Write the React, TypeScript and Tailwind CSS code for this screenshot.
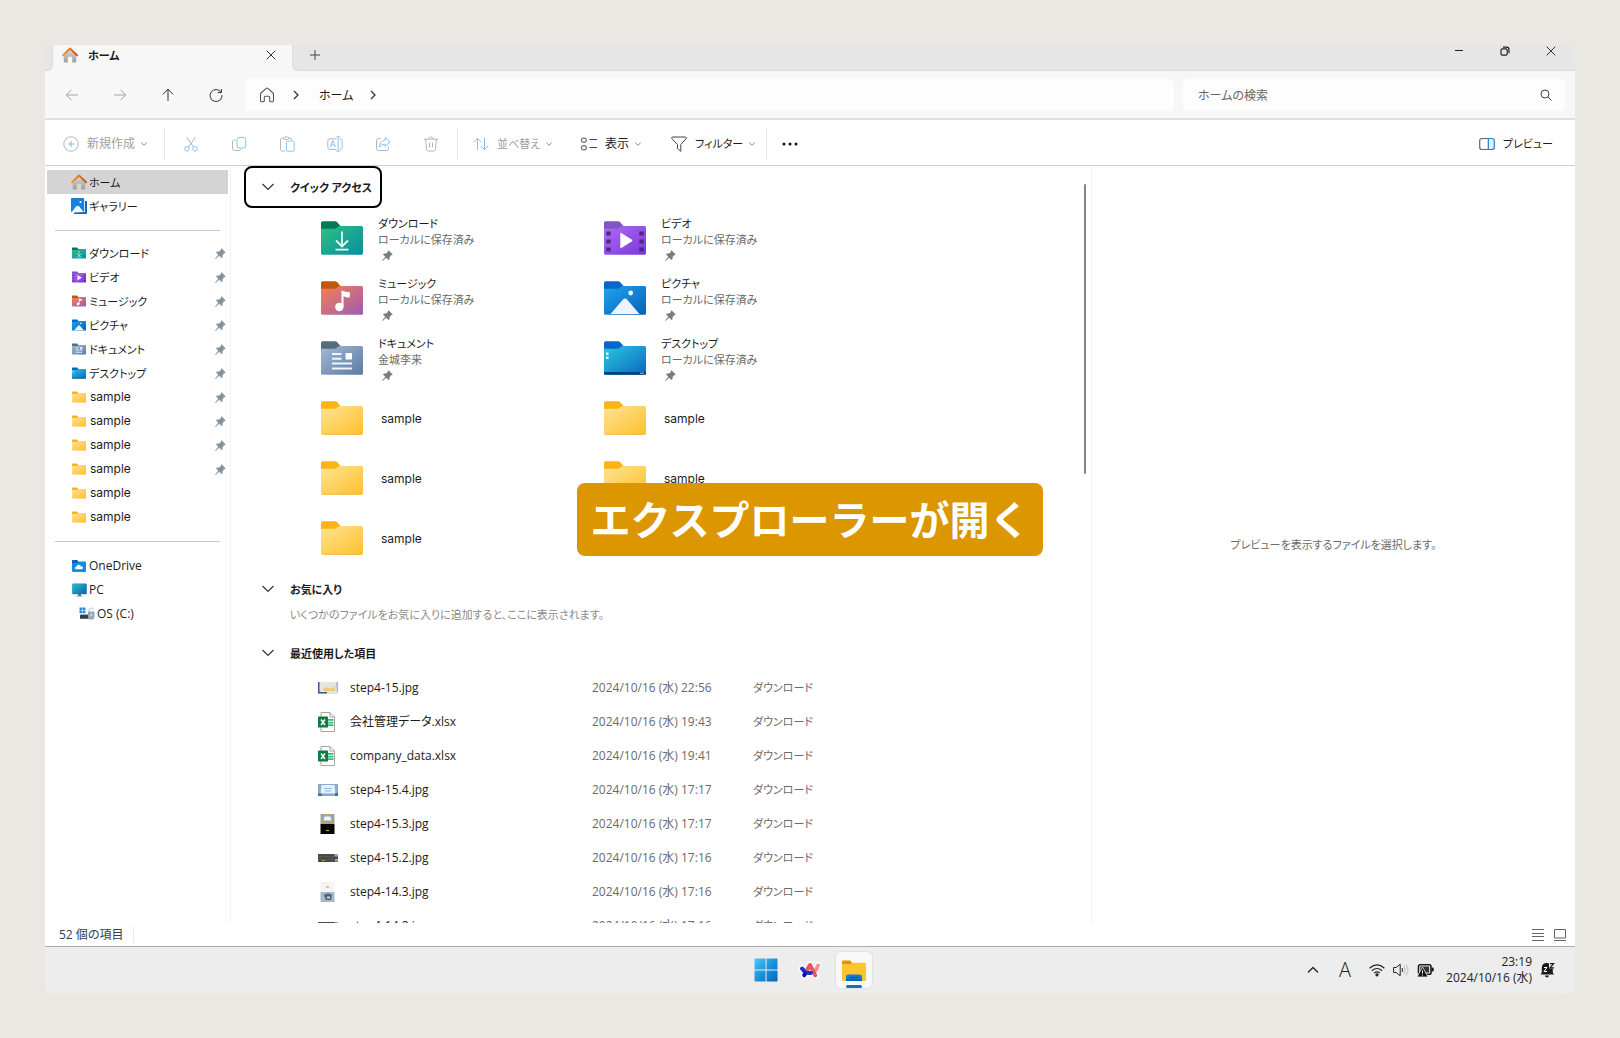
import { useId, type ReactNode } from 'react'
import clsx from 'clsx'

type FolderKind =
  | 'download'
  | 'video'
  | 'music'
  | 'picture'
  | 'document'
  | 'desktop'
  | 'plain'

type SideItem = { label: string; kind: FolderKind; pinned?: boolean }

const sideFolders: SideItem[] = [
  { label: 'ダウンロード', kind: 'download', pinned: true },
  { label: 'ビデオ', kind: 'video', pinned: true },
  { label: 'ミュージック', kind: 'music', pinned: true },
  { label: 'ピクチャ', kind: 'picture', pinned: true },
  { label: 'ドキュメント', kind: 'document', pinned: true },
  { label: 'デスクトップ', kind: 'desktop', pinned: true },
  { label: 'sample', kind: 'plain', pinned: true },
  { label: 'sample', kind: 'plain', pinned: true },
  { label: 'sample', kind: 'plain', pinned: true },
  { label: 'sample', kind: 'plain', pinned: true },
  { label: 'sample', kind: 'plain' },
  { label: 'sample', kind: 'plain' },
]

const quickFolders: { label: string; kind: FolderKind; note?: string }[] = [
  { label: 'ダウンロード', kind: 'download', note: 'ローカルに保存済み' },
  { label: 'ビデオ', kind: 'video', note: 'ローカルに保存済み' },
  { label: 'ミュージック', kind: 'music', note: 'ローカルに保存済み' },
  { label: 'ピクチャ', kind: 'picture', note: 'ローカルに保存済み' },
  { label: 'ドキュメント', kind: 'document', note: '金城李来' },
  { label: 'デスクトップ', kind: 'desktop', note: 'ローカルに保存済み' },
  { label: 'sample', kind: 'plain' },
  { label: 'sample', kind: 'plain' },
  { label: 'sample', kind: 'plain' },
  { label: 'sample', kind: 'plain' },
  { label: 'sample', kind: 'plain' },
]

const recentFiles = [
  { name: 'step4-15.jpg', date: '2024/10/16 (水) 22:56', thumb: <ThumbMap /> },
  { name: '会社管理データ.xlsx', date: '2024/10/16 (水) 19:43', thumb: <ExcelIcon /> },
  { name: 'company_data.xlsx', date: '2024/10/16 (水) 19:41', thumb: <ExcelIcon /> },
  { name: 'step4-15.4.jpg', date: '2024/10/16 (水) 17:17', thumb: <ThumbScreen /> },
  { name: 'step4-15.3.jpg', date: '2024/10/16 (水) 17:17', thumb: <ThumbTall dark /> },
  { name: 'step4-15.2.jpg', date: '2024/10/16 (水) 17:16', thumb: <ThumbKeyboard /> },
  { name: 'step4-14.3.jpg', date: '2024/10/16 (水) 17:16', thumb: <ThumbTall /> },
  { name: 'step4-14.2.jpg', date: '2024/10/16 (水) 17:16', thumb: <ThumbKeyboard /> },
]

export default function App() {
  return (
    <div className="relative flex h-screen min-h-[600px] flex-col bg-[#e9e8e3] p-[45px] font-['Open_Sans','Noto_Sans_CJK_JP',sans-serif] text-xs leading-4 text-[#1b1b1b] [font-feature-settings:'palt']">
      <div className="flex min-h-0 flex-1 flex-col overflow-hidden rounded-b-lg bg-white">
        <TitleBar />
        <AddressBar />
        <Toolbar />
        <div className="flex min-h-0 flex-1">
          <Sidebar />
          <FileList />
          <section className="flex w-[484px] shrink items-center justify-center border-l border-[#f3f3f3] text-[11px] text-[#6a6a6a]">
            プレビューを表示するファイルを選択します。
          </section>
        </div>
        <StatusBar />
        <Taskbar />
      </div>

      <div className="pointer-events-none absolute inset-0 flex items-center justify-center">
        <p className="rounded-lg bg-[#db9600] px-3.5 py-2 text-[40px] leading-[57px] font-bold text-white [font-feature-settings:normal]">
          エクスプローラーが開く
        </p>
      </div>
    </div>
  )
}

function TitleBar() {
  return (
    <header className="flex h-[26px] shrink-0 bg-[#f7f7f7]">
      <div className="w-2 rounded-br-md border-r border-b border-[#dcdcdc] bg-[#e6e6e6]" />
      <div className="flex w-[239px] items-center pr-3 pb-1.5 pl-[9px]">
        <HomeColorIcon />
        <span className="ml-2.5 flex-1 pt-0.5 text-[11px] font-semibold">ホーム</span>
        <button aria-label="タブを閉じる" className="p-1">
          <CloseIcon />
        </button>
      </div>
      <div className="flex flex-1 rounded-bl-md border-b border-l border-[#dcdcdc] bg-[#e6e6e6]">
        <button aria-label="新しいタブ" className="ml-[17px] self-start pt-[5px]">
          <svg viewBox="0 0 10 10" className="h-2.5 w-2.5" stroke="#444" fill="none">
            <path d="M5 0v10M0 5h10" />
          </svg>
        </button>
        <div className="ml-auto flex items-start gap-9 pt-px pr-[19px]">
          <button aria-label="最小化">
            <svg viewBox="0 0 10 10" className="h-2.5 w-2.5" stroke="#222" fill="none">
              <path d="M1 4.5h8" />
            </svg>
          </button>
          <button aria-label="元に戻す">
            <svg viewBox="0 0 10 10" className="h-2.5 w-2.5" stroke="#222" strokeWidth="1.2" fill="none">
              <rect x="1" y="2.8" width="6.2" height="6.4" rx="1.4" />
              <path d="M3 1.2h3.8Q9 1.2 9 3.4v3.8" />
            </svg>
          </button>
          <button aria-label="閉じる">
            <CloseIcon />
          </button>
        </div>
      </div>
    </header>
  )
}

function AddressBar() {
  return (
    <div className="flex h-[49px] shrink-0 items-start border-b-2 border-[#dfdfdf] bg-[#f7f7f7] pt-2 pr-2.5 pl-[19px]">
      <div className="flex h-8 w-[181px] shrink-0 items-center gap-8">
        <NavButton label="戻る" className="text-[#a3a3a3]">
          <path d="M14 8H2.5M7.5 2.8 2.2 8l5.3 5.2" />
        </NavButton>
        <NavButton label="進む" className="text-[#a3a3a3]">
          <path d="M2 8h11.500M8.500 2.800 13.800 8l-5.300 5.200" />
        </NavButton>
        <NavButton label="上へ" className="text-[#333]">
          <path d="M8 14V2.500M2.800 7.500 8 2.200l5.200 5.300" />
        </NavButton>
        <NavButton label="更新" className="text-[#333]">
          <path d="M13 5.200A6 6 0 1 0 14 8M13.400 2v3.600H9.800" />
        </NavButton>
      </div>
      <nav className="flex h-8 min-w-0 flex-1 items-center rounded bg-[#fdfdfd] pl-3.5" aria-label="パス">
        <button aria-label="ホーム">
          <svg viewBox="0 0 16 16" className="h-4 w-4" fill="none" stroke="#555" strokeWidth="1.1" strokeLinejoin="round">
            <path d="M1.5 7.2Q1.500 6.500 2 6L7.200 1.400q.8-.7 1.600 0L14 6q.5.5.5 1.200v6.300q0 1.200-1.200 1.200h-1.600q-1 0-1-1v-3.200Q10.700 9.300 9.500 9.300h-3Q5.300 9.300 5.300 10.500v3.200q0 1-1 1H2.700q-1.200 0-1.200-1.200z" />
          </svg>
        </button>
        <ChevronRight className="ml-4" />
        <a href="#" className="ml-[18px] pt-0.5">
          ホーム
        </a>
        <ChevronRight className="ml-[15px]" />
      </nav>
      <label className="ml-[9px] flex h-8 w-[382px] shrink items-center rounded bg-[#fdfdfd] pr-[13px] pl-[15px]">
        <input
          type="text"
          aria-label="検索"
          placeholder="ホームの検索"
          className="min-w-0 flex-1 bg-transparent pt-0.5 text-xs outline-none placeholder:text-[#666]"
        />
        <svg viewBox="0 0 12 12" className="h-3 w-3" fill="none" stroke="#444">
          <circle cx="5" cy="5" r="4" />
          <path d="m8 8 3.500 3.500" />
        </svg>
      </label>
    </div>
  )
}

function NavButton({ label, className, children }: { label: string; className: string; children: ReactNode }) {
  return (
    <button aria-label={label} className={className}>
      <svg viewBox="0 0 16 16" className="h-4 w-4" fill="none" stroke="currentColor">
        {children}
      </svg>
    </button>
  )
}

function Toolbar() {
  return (
    <div className="flex h-[46px] shrink-0 items-center border-b border-[#cfcfcf] pt-[3px] pr-[22px] pl-[18px]">
      <button className="flex w-[101px] items-center text-[#a0a0a0]">
        <svg viewBox="0 0 16 16" className="h-4 w-4" fill="none" stroke="#b5b5b5">
          <circle cx="8" cy="8" r="7.2" />
          <path d="M8 4.800v6.400M4.800 8h6.400" stroke="#7fbdf0" />
        </svg>
        <span className="ml-2">新規作成</span>
        <ChevronSmall className="ml-1.5" />
      </button>
      <div className="flex h-8 items-center gap-8 border-x border-[#e6e6e6] px-[18px]">
        <ToolIcon label="切り取り">
          <path d="M3.500 1 10.500 11M12.500 1 5.500 11" stroke="#b5b5b5" />
          <circle cx="4" cy="12.800" r="2.300" />
          <circle cx="12" cy="12.800" r="2.300" />
        </ToolIcon>
        <ToolIcon label="コピー">
          <path d="M4.500 4H3.300Q1.500 4 1.500 5.800v6.400Q1.500 14.500 3.800 14.500h4q2 0 2.200-1.700" stroke="#b5b5b5" />
          <rect x="6" y="1.500" width="8.700" height="10.500" rx="2" />
        </ToolIcon>
        <ToolIcon label="貼り付け">
          <path d="M6 15H3.200Q1.500 15 1.500 13.300V3.800Q1.500 2.200 3.200 2.200H11Q12.600 2.200 12.600 3.800" stroke="#b5b5b5" />
          <rect x="4.500" y="1" width="5.200" height="2.400" rx="1.200" stroke="#b5b5b5" fill="#fff" />
          <rect x="7.500" y="5" width="7.700" height="10.200" rx="1.400" />
        </ToolIcon>
        <ToolIcon label="名前の変更">
          <path d="M9.500 2.800H3Q.8 2.800.8 5v6.200q0 2.200 2.200 2.200h6.500M13 2.800q2.200 0 2.200 2.200v6.200q0 2.200-2.200 2.200" stroke="#b5b5b5" />
          <path d="m3.200 11 2.700-6.500L8.600 11M4.200 9h3.400M11.200.8v14.400M9.500.8h3.400M9.500 15.200h3.400" />
        </ToolIcon>
        <ToolIcon label="共有">
          <path d="M5.500 2.500H3.800q-2.300 0-2.300 2.300v7.400q0 2.300 2.300 2.300h7.400q2.300 0 2.300-2.300v-1.700" stroke="#b5b5b5" />
          <path d="M10.200 1.500 15 6l-4.800 4.500V8.200Q6.500 8 4.500 11 5 4.800 10.200 4z" strokeLinejoin="round" />
        </ToolIcon>
        <ToolIcon label="削除">
          <g stroke="#b5b5b5">
            <path d="M1 3.200h14M5.600 3Q5.800 1 8 1t2.400 2M2.500 3.200l1.100 10.200q.2 1.600 1.700 1.600h5.400q1.500 0 1.700-1.600l1.100-10.200M6.500 6.500v5M9.500 6.500v5" />
          </g>
        </ToolIcon>
      </div>
      <div className="flex h-8 flex-1 items-center pl-[15px]">
        <button className="flex w-[108px] items-center text-[#a0a0a0]">
          <svg viewBox="0 0 16 16" className="h-4 w-4" fill="none" stroke="#b5b5b5">
            <path d="M4.500 14V2.200M.8 6l3.700-3.800L8 6" />
            <path d="M11.500 2v11.800M8 10l3.500 3.800L15.200 10" stroke="#7fbdf0" />
          </svg>
          <span className="ml-2 text-[11px]">並べ替え</span>
          <ChevronSmall className="ml-1.5" />
        </button>
        <button className="flex w-[90px] items-center">
          <svg viewBox="0 0 16 16" className="h-4 w-4" fill="none" stroke="#444">
            <rect x=".6" y="2.200" width="4.600" height="4" rx="1" />
            <rect x=".6" y="9.800" width="4.600" height="4" rx="1" />
            <path d="M8.500 3.500H16M8.500 11.500H16" />
          </svg>
          <span className="ml-2">表示</span>
          <ChevronSmall className="ml-1.5" />
        </button>
        <button className="flex w-[95px] items-center">
          <svg viewBox="0 0 16 16" className="h-4 w-4" fill="none" stroke="#444" strokeLinejoin="round">
            <path d="M1.300 1h13.400q1 .8.300 1.800L9.800 8.500v6.800L6.500 12.500v-4L1 2.800Q.3 1.800 1.300 1z" />
          </svg>
          <span className="ml-2 text-[11px]">フィルター</span>
          <ChevronSmall className="ml-1.5" />
        </button>
        <button aria-label="詳細" className="h-8 border-l border-[#e6e6e6] pl-[15px]">
          <svg viewBox="0 0 16 4" className="h-1 w-4" fill="#111">
            <circle cx="2" cy="2" r="1.500" />
            <circle cx="8" cy="2" r="1.500" />
            <circle cx="14" cy="2" r="1.500" />
          </svg>
        </button>
        <button className="ml-auto flex items-center">
          <svg viewBox="0 0 16 16" className="h-4 w-4" fill="none" strokeWidth="1.200">
            <path d="M9 2.500H3Q.7 2.500.7 4.800v6.400q0 2.300 2.300 2.300h6" stroke="#666" />
            <path d="M9.300 2.500H13q2.300 0 2.300 2.300v6.400q0 2.300-2.300 2.300H9.300z" fill="#e8f3fc" stroke="#1a7fd6" />
          </svg>
          <span className="ml-2 text-[11px]">プレビュー</span>
        </button>
      </div>
    </div>
  )
}

function ToolIcon({ label, children }: { label: string; children: ReactNode }) {
  return (
    <button aria-label={label}>
      <svg viewBox="0 0 16 16" className="h-4 w-4" fill="none" stroke="#8cc4f2">
        {children}
      </svg>
    </button>
  )
}

function SideRow({
  icon,
  label,
  pinned,
  active,
  nested,
  latin,
}: {
  icon: ReactNode
  label: string
  pinned?: boolean
  active?: boolean
  nested?: boolean
  latin?: boolean
}) {
  return (
    <a
      href="#"
      className={clsx(
        'flex h-6 items-center pr-0.5',
        nested ? 'pl-8' : 'pl-6',
        active && 'bg-[#d4d4d4]',
      )}
    >
      <span className="flex w-4 shrink-0 justify-center">{icon}</span>
      <span
        className={clsx(
          'flex-1',
          label === 'sample' ? "ml-[3px] font-['Inter',sans-serif]" : 'ml-0.5',
          label !== 'sample' && !latin && 'pt-0.5 text-[11px]',
        )}
      >
        {label}
      </span>
      {pinned && <PinIcon className="text-[#87939b]" />}
    </a>
  )
}

function Sidebar() {
  return (
    <aside className="w-[186px] shrink-0 border-r border-[#f3f3f3] px-0.5 pt-1">
      <SideRow active icon={<HomeColorIcon />} label="ホーム" />
      <SideRow icon={<GalleryIcon />} label="ギャラリー" />
      <hr className="mx-2 mt-3 mb-2.5 border-[#c9c9c9]" />
      {sideFolders.map((item, i) => (
        <SideRow
          key={i}
          icon={<FolderIcon kind={item.kind} className="h-3 w-3.5" />}
          label={item.label}
          pinned={item.pinned}
        />
      ))}
      <hr className="mx-2 my-3 border-[#c9c9c9]" />
      <SideRow latin icon={<OneDriveIcon />} label="OneDrive" />
      <SideRow latin icon={<PcIcon />} label="PC" />
      <SideRow latin nested icon={<DriveIcon />} label="OS (C:)" />
    </aside>
  )
}

function SectionHeading({ label, focused }: { label: string; focused?: boolean }) {
  return (
    <button
      className={clsx(
        'ml-[13px] flex items-center rounded-lg border-2 pr-2 pl-4 text-[11px] font-semibold',
        focused ? 'h-[42px] border-black' : 'mt-[3px] h-9 border-transparent',
      )}
    >
      <svg viewBox="0 0 12 12" className="h-3 w-3" fill="none" stroke="#333" strokeWidth="1.200">
        <path d="m.5 3 5.500 5.500L11.500 3" />
      </svg>
      <span className="ml-4 pt-0.5">{label}</span>
    </button>
  )
}

function FileList() {
  return (
    <main className="relative min-w-0 flex-1 overflow-hidden">
      <SectionHeading focused label="クイック アクセス" />
      <div className="grid grid-cols-[repeat(2,283px)] pl-[90px]">
        {quickFolders.map((f, i) => (
          <a href="#" key={i} className="flex h-[60px] items-center">
            <FolderIcon kind={f.kind} className="h-[34px] w-[42px]" />
            {f.note ? (
              <span className="ml-[15px] flex flex-col text-[11px]">
                <span>{f.label}</span>
                <span className="text-[#6a6a6a]">{f.note}</span>
                <PinIcon className="mt-0.5 ml-1 text-[#7c7c7c]" />
              </span>
            ) : (
              <span className="ml-[18px] pt-0.5 font-['Inter',sans-serif]">{f.label}</span>
            )}
          </a>
        ))}
      </div>
      <SectionHeading label="お気に入り" />
      <p className="mb-3 ml-[59px] text-[11px] text-[#8b8b8b]">
        いくつかのファイルをお気に入りに追加すると、ここに表示されます。
      </p>
      <SectionHeading label="最近使用した項目" />
      <table className="ml-[87px] table-fixed">
        <tbody>
          {recentFiles.map((f) => (
            <tr key={f.name} className="h-[34px]">
              <td className="w-8">{f.thumb}</td>
              <td className="w-[242px]">{f.name}</td>
              <td className="w-[161px] text-[#6a6a6a]">{f.date}</td>
              <td className="w-[120px] text-[11px] text-[#6a6a6a]">ダウンロード</td>
            </tr>
          ))}
        </tbody>
      </table>
      <div className="absolute top-[18px] right-[5px] h-[290px] w-0.5 rounded-full bg-[#858585]" />
    </main>
  )
}

function StatusBar() {
  return (
    <div className="flex h-6 shrink-0 items-center border-b border-[#adadad] pr-[9px] pl-3.5 text-[#2c3e55]">
      <span className="border-r border-[#e9e9e9] pr-2.5">52 個の項目</span>
      <div className="ml-auto flex gap-2.5">
        <button aria-label="詳細表示">
          <svg viewBox="0 0 12 12" className="h-3 w-3" stroke="#666">
            <path d="M0 .5h12M0 4.500h12M0 7.500h12M0 11.500h12" />
          </svg>
        </button>
        <button aria-label="大きいアイコン">
          <svg viewBox="0 0 12 12" className="h-3 w-3" stroke="#666" fill="none">
            <path d="M.5.5h11V9H.5zM0 11.500h12" />
          </svg>
        </button>
      </div>
    </div>
  )
}

function Taskbar() {
  return (
    <footer className="flex h-[46px] shrink-0 items-center bg-[#ededed] px-5">
      <div className="flex-1" />
      <div className="flex gap-1.5">
        <button aria-label="スタート" className="flex h-[38px] w-[38px] items-center justify-center">
          <svg viewBox="0 0 24 24" className="h-6 w-6">
            <defs>
              <linearGradient id="win" x1="0" y1="0" x2="1" y2="1">
                <stop offset="0" stopColor="#4cc8fb" />
                <stop offset=".5" stopColor="#1b92dc" />
                <stop offset="1" stopColor="#0767c0" />
              </linearGradient>
            </defs>
            <path fill="url(#win)" d="M1 .5h10.500v11H.5V1zM12.500.5H23l.5.500v10.500h-11zM.5 12.500h11v11H1L.5 23zM12.500 12.500h11V23l-.5.500H12.500z" />
          </svg>
        </button>
        <button aria-label="Arc" className="flex h-[38px] w-[38px] items-center justify-center">
          <svg viewBox="0 0 22 20" className="h-5 w-[22px]" fill="none" strokeLinecap="round" strokeLinejoin="round">
            <path d="M3 8.500q4 6 9 4.500t7-8M5 15.500 11 5l5.500 10.500" stroke="#fff" strokeWidth="6.500" />
            <path d="M19 5.500q-1 4-4 6.500" stroke="#ff8c93" strokeWidth="4" />
            <path d="M3 8.500q3.500 4.800 8.500 4.500" stroke="#1430d8" strokeWidth="4" />
            <path d="M6.500 13l-1.300 2.300" stroke="#2106a8" strokeWidth="4" />
            <path d="M8.300 9.500 11 5l5.300 10.300" stroke="#f0505f" strokeWidth="4" />
            <path d="M8 12.300q2 .9 4.500.5" stroke="#1430d8" strokeWidth="3" />
          </svg>
        </button>
        <button
          aria-label="エクスプローラー"
          className="flex h-[38px] w-[38px] flex-col items-center rounded-md border border-[#e2e2e2] bg-[#f8f8f8] pt-2"
        >
          <svg viewBox="0 0 24 22" className="h-[22px] w-6">
            <path d="M0 1.500Q0 .5 1 .5h7l2 2v3H0z" fill="#d99400" />
            <path d="M0 4h8.500L10 2.800h13q1 0 1 1V20q0 1-1 1H1q-1 0-1-1z" fill="#fcc52e" />
            <path d="M4 21v-4q0-2.500 2.500-2.500h11Q20 14.500 20 17v4z" fill="#0f7cd4" />
            <path d="M4 21v-2h16v2z" fill="#0c62ad" />
            <path d="M7.500 17.500h9" stroke="#0a4c8c" />
          </svg>
          <span className="mt-[3px] h-[3px] w-4 rounded-full bg-[#0a74cc]" />
        </button>
      </div>
      <div className="flex flex-1 items-center justify-end text-[#222]">
        <button aria-label="隠れているインジケーター" className="mr-5">
          <svg viewBox="0 0 12 12" className="h-3 w-3" fill="none" stroke="#222" strokeWidth="1.300">
            <path d="m1 8.500 5-5 5 5" />
          </svg>
        </button>
        <button className="mr-[18px] text-xl font-light">A</button>
        <div className="mr-3 flex items-center gap-2">
          <svg viewBox="0 0 16 16" className="h-4 w-4" fill="none" stroke="#222" strokeWidth="1.200">
            <path d="M.6 6.200q7.400-6.600 14.800 0M2.900 8.700q5.100-4.400 10.200 0M5.200 11.100q2.800-2.300 5.600 0" />
            <circle cx="8" cy="12.800" r="1" fill="#222" />
          </svg>
          <svg viewBox="0 0 16 16" className="h-4 w-4" fill="none" stroke="#222" strokeLinejoin="round">
            <path d="M.6 5.500h2.600l4-3.300v11.600l-4-3.300H.6z" />
            <path d="M9 6q1.200 2 0 4" />
            <path d="M11 4q2.500 4 0 8M13 2.500q4 5.500 0 11" stroke="#bbb" />
          </svg>
          <svg viewBox="0 0 17 16" className="h-4 w-[17px]">
            <rect x="1.500" y="2.700" width="12.500" height="9.600" rx="1.800" fill="#fff" stroke="#1a1a1a" strokeWidth="1.600" />
            <path d="M3.200 4.400h9v6.200h-9z" fill="#333" />
            <path d="M14.500 5.500h1.200q1 0 1 1v2q0 1-1 1h-1.200z" fill="#1a1a1a" />
            <path d="M5.500 5 11 15H0z" fill="#111" stroke="#ededed" strokeWidth=".8" />
            <path d="M5.500 8.500v3M5.500 12.500v1" stroke="#fff" />
          </svg>
        </div>
        <div className="text-right">
          <div>23:19</div>
          <div>2024/10/16 (水)</div>
        </div>
        <svg viewBox="0 0 15 16" className="ml-2 h-4 w-[15px]" fill="#1a1a1a">
          <path d="M1.800 6q0-5 5-5 6 0 6 6v3.500l1.200 2H.6l1.200-2z" />
          <path d="M5 13.500h4q-.4 2-2 2t-2-2z" />
          <path d="M4 5.500h3L4 9.500h3" fill="none" stroke="#fff" />
          <path d="M9 .5h6v6H9z" fill="#ededed" />
          <path d="M10 1.600h3.600L10 5.800h4" fill="none" stroke="#1a1a1a" strokeWidth="1.200" />
        </svg>
      </div>
    </footer>
  )
}

/* ---- icons ---- */

function CloseIcon() {
  return (
    <svg viewBox="0 0 10 10" className="h-2.5 w-2.5" stroke="#333" fill="none">
      <path d="m.7.7 8.600 8.600M9.300.7.7 9.300" />
    </svg>
  )
}

function ChevronRight({ className }: { className?: string }) {
  return (
    <svg viewBox="0 0 10 10" className={clsx('h-2.5 w-2.5', className)} fill="none" stroke="#333" strokeWidth="1.300">
      <path d="m3 1 4 4-4 4" />
    </svg>
  )
}

function ChevronSmall({ className }: { className?: string }) {
  return (
    <svg viewBox="0 0 6 6" className={clsx('h-1.5 w-1.5', className)} fill="none" stroke="#888">
      <path d="m.3 1.700 2.700 2.600 2.700-2.600" />
    </svg>
  )
}

function PinIcon({ className }: { className?: string }) {
  return (
    <svg viewBox="0 0 11 11" className={clsx('h-[11px] w-[11px]', className)} fill="currentColor">
      <path d="M6.500.3 10.700 4.400 9.700 5.300 9 5.200 7.600 7.300 7.500 9.200 6.500 10 4.200 7.700.5 10.900.1 10.500 3.300 6.800 1 4.500 2 3.600 3.900 3.500 6 2 5.700 1.200z" />
    </svg>
  )
}

function HomeColorIcon() {
  const id = useId()
  return (
    <svg viewBox="0 0 16 16" className="h-4 w-4 shrink-0">
      <defs>
        <linearGradient id={`${id}roof`} x1="0" y1="0" x2="1" y2="0">
          <stop offset="0" stopColor="#f59a2c" />
          <stop offset="1" stopColor="#d64f12" />
        </linearGradient>
        <linearGradient id={`${id}wall`} x1="0" y1="0" x2="0" y2="1">
          <stop offset="0" stopColor="#d9d9d9" />
          <stop offset="1" stopColor="#9e9e9e" />
        </linearGradient>
      </defs>
      <path d="M1.700 7.500 8 2l6.300 5.500v6.800q0 1.200-1.200 1.200h-2.900v-5q0-.8-.8-.8H6.600q-.8 0-.8.8v5H2.900q-1.200 0-1.200-1.200z" fill={`url(#${id}wall)`} />
      <path d="M1 8.300 8 1.500l7 6.800" fill="none" stroke={`url(#${id}roof)`} strokeWidth="1.900" strokeLinecap="round" strokeLinejoin="round" />
    </svg>
  )
}

function GalleryIcon() {
  return (
    <svg viewBox="0 0 16 16" className="h-4 w-4">
      <path d="M3 14.500V16h12q1 0 1-1V3h-2v11z" fill="#1069b8" />
      <rect width="13.200" height="14" rx="1" fill="#1581d8" />
      <path d="M.8 14 5 8.500q1.600-1.400 3.200 0L12.600 14z" fill="#f2f8ff" />
      <circle cx="9.500" cy="4" r="1.100" fill="#fff" />
    </svg>
  )
}

function OneDriveIcon() {
  return (
    <svg viewBox="0 0 14 12" className="h-3 w-3.5">
      <path d="M0 1q0-1 1-1h4l1.300 1.500H13q1 0 1 1V11q0 1-1 1H1q-1 0-1-1z" fill="#0f8ee6" />
      <path d="M0 1q0-1 1-1h4l1.300 1.500L5 3H0z" fill="#0b62b5" />
      <path d="M4.500 9.200q-1.500 0-1.500-1.300t1.500-1.400Q5 4.800 6.800 4.800q1.700 0 2.200 1.500 2 0 2 1.500T9.500 9.200z" fill="#fff" />
    </svg>
  )
}

function PcIcon() {
  return (
    <svg viewBox="0 0 15 14" className="h-3.5 w-[15px]">
      <defs>
        <linearGradient id="pc" x1="0" y1="0" x2="1" y2="1">
          <stop offset="0" stopColor="#27c1c9" />
          <stop offset="1" stopColor="#0b5fb0" />
        </linearGradient>
      </defs>
      <rect x=".3" y=".8" width="14.400" height="10.200" rx=".8" fill="url(#pc)" stroke="#2b7fa8" strokeWidth=".5" />
      <path d="M6 11h3v1.800H6z" fill="#5b6870" />
      <path d="M4.500 12.700h6v.8h-6z" fill="#76848c" />
    </svg>
  )
}

function DriveIcon() {
  return (
    <svg viewBox="0 0 16 14" className="h-3.5 w-4">
      <path d="M.5.5h2.700v2.700H.5zM3.700.5h2.700v2.700H3.700zM.5 3.700h2.700v2.600H.5zM3.700 3.700h2.700v2.600H3.700z" fill="#1d8be0" />
      <path d="M1 8h9v3.800H1z" fill="#3a3f43" />
      <path d="M2 7.200h7.500l.5.800H1z" fill="#8d9498" />
      <path d="M10.300 5V3q0-2 2-2t2 2" fill="none" stroke="#b9d3e6" strokeWidth="1.200" />
      <path d="M9 4.500h6.500V10q0 1.500-1.500 2.300-1.800.8-3.500 0Q9 11.500 9 10z" fill="#9aa9b8" />
      <circle cx="12.300" cy="8" r="1" fill="#dfe7ee" />
    </svg>
  )
}

const folderColors: Record<FolderKind, [string, string, string]> = {
  download: ['#047857', '#2fbf83', '#0790a0'],
  video: ['#7e57c2', '#b26cf0', '#7a36dc'],
  music: ['#c2570c', '#f68150', '#9d5bb4'],
  picture: ['#0567cb', '#20a4ee', '#0660b8'],
  document: ['#546e7a', '#a3b9d2', '#5a7ba4'],
  desktop: ['#0567cb', '#2cc8dc', '#0b66c4'],
  plain: ['#fbb414', '#ffe394', '#fdc12c'],
}

function FolderIcon({ kind, className }: { kind: FolderKind; className: string }) {
  const id = useId()
  const [tab, from, to] = folderColors[kind]
  return (
    <svg viewBox="0 0 42 34" className={clsx('shrink-0', className)}>
      <defs>
        <linearGradient id={id} x1="0" y1="0" x2="1" y2="1">
          <stop offset="0" stopColor={from} />
          <stop offset="1" stopColor={to} />
        </linearGradient>
      </defs>
      <path d="M0 1.800Q0 .3 1.500.3h12.700q1 0 1.800.8L19.500 5v6H0z" fill={tab} />
      <path d="M0 7.800h13.500q1 0 1.900-.7l2-1.500q.8-.6 1.800-.6h21.300q1.500 0 1.500 1.500v25.700q0 1.500-1.500 1.500h-39Q0 33.700 0 32.200z" fill={`url(#${id})`} />
      <FolderGlyph kind={kind} />
    </svg>
  )
}

function FolderGlyph({ kind }: { kind: FolderKind }) {
  switch (kind) {
    case 'download':
      return (
        <path d="M21 10.500V25M15 19.500l6 6 6-6M14.500 28.700h13" fill="none" stroke="#e6fbf1" strokeWidth="1.800" />
      )
    case 'video':
      return (
        <>
          <path d="M16.300 12.500v14q0 1 1 .5L28 20.300q.8-.8 0-1.500L17.300 12q-1-.5-1 .5z" fill="#fff" />
          <path d="M2.300 10.500h4.400v4H2.300zM2.300 18.500h4.400v4H2.300zM2.300 26.500h4.400v4H2.300zM35.300 10.500h4.400v4h-4.400zM35.300 18.500h4.400v4h-4.400zM35.300 26.500h4.400v4h-4.400z" fill="#4b2a86" />
        </>
      )
    case 'music':
      return (
        <>
          <circle cx="18.300" cy="26" r="4.200" fill="#fff" />
          <path d="M20.500 9.500q4 1.800 8.300 1.700v5.200q-3.300.3-6.300-1.200V26h-2z" fill="#fff" />
        </>
      )
    case 'picture':
      return (
        <>
          <path d="M6.500 33 19 18.500q2-1.800 4 0L35.500 33z" fill="#eef4ff" />
          <circle cx="26.700" cy="12" r="2.400" fill="#e8f5ff" />
        </>
      )
    case 'document':
      return (
        <>
          <path d="M11 13h9.500M11 17.700h9.500M11 22.500h20M11 27.500h20" stroke="#f0f5fb" strokeWidth="2" />
          <rect x="24.500" y="12" width="6.500" height="6.500" rx=".8" fill="#fff" />
        </>
      )
    case 'desktop':
      return (
        <>
          <path d="M2 11.500h2.500V14H2zM2 15.500h2.500V18H2z" fill="#d9fbff" />
          <path d="M0 31h42v1.200q0 1.500-1.500 1.500h-39Q0 33.700 0 32.200z" fill="#08407e" />
          <path d="M36 32.200h4" stroke="#9fc8ee" />
        </>
      )
    default:
      return <path d="M1 33.200h40" stroke="#f0ae2e" strokeWidth=".7" />
  }
}

function ExcelIcon() {
  return (
    <svg viewBox="0 0 18 20" className="h-5 w-[18px]">
      <path d="M3 .5h9L16.500 5v14.500H3z" fill="#fff" stroke="#a5a5a5" />
      <path d="M12 .5V5h4.500" fill="none" stroke="#a5a5a5" />
      <path d="M10 7h5.500v1.700H10zM10 9.700h5.500v1.700H10zM10 12.300h5.500V14H10z" fill="#3fb97c" />
      <rect y="4.500" width="10" height="11" rx=".6" fill="#107c41" />
      <path d="m3 7.500 4 5.500M7 7.500 3 13" stroke="#fff" strokeWidth="1.500" />
    </svg>
  )
}

function ThumbMap() {
  return (
    <svg viewBox="0 0 20 12" className="h-3 w-5">
      <path d="M0 0h20v12H0z" fill="#e6e4df" />
      <path d="M0 0h1.500v10H9v1.500H0z" fill="#3c5a86" />
      <path d="M5 7q3-3 6-1t6-2v5H6z" fill="#f0c878" />
      <path d="M18 0h2v10h-1z" fill="#a9b8c8" />
    </svg>
  )
}

function ThumbScreen() {
  return (
    <svg viewBox="0 0 20 12" className="h-3 w-5">
      <path d="M0 0h20v12H0z" fill="#8fa9c6" />
      <path d="M3.500 1h13l1 8.500h-15z" fill="#e4f0fb" />
      <path d="M6 4.500h8M7 7h6" stroke="#8bbcec" />
      <path d="M0 9.500h4V12H0zM17 9h3v3h-3z" fill="#4d6d95" />
    </svg>
  )
}

function ThumbTall({ dark }: { dark?: boolean }) {
  return (
    <svg viewBox="0 0 20 20" className="h-5 w-5">
      <path d="M2.500 0h14v10h-14z" fill={dark ? '#9aa4a8' : '#f4f4f4'} />
      <path d="M2.500 10h14v10h-14z" fill={dark ? '#050505' : '#a9b6c4'} />
      {dark ? (
        <>
          <path d="M6.500 2.500h6l1 4h-8z" fill="#f5f5f5" />
          <path d="M5.500 1h8M3.500 8.500h4M12 8.500h3.500M8 16.500h3" stroke="#e0a233" />
        </>
      ) : (
        <>
          <path d="M8 5h3" stroke="#eeb04a" strokeWidth="1.500" />
          <path d="M6 13q4-3 8 0l-1 5H8z" fill="#426388" />
          <path d="M9 14.500h3v2H9z" fill="#d6d9c8" />
        </>
      )}
    </svg>
  )
}

function ThumbKeyboard() {
  return (
    <svg viewBox="0 0 20 8" className="h-2 w-5">
      <path d="M0 0h20v8H0z" fill="#4a4a4a" />
      <path d="M0 2.500h16M0 5.500h16" stroke="#6d6d6d" strokeWidth=".6" strokeDasharray="1.500 .6" />
      <path d="M16.500 0H20v2.500h-3.500zM17 5h3v2.500h-3z" fill="#a5a5a5" />
      <path d="M4 6.500h3" stroke="#a8864d" />
    </svg>
  )
}
